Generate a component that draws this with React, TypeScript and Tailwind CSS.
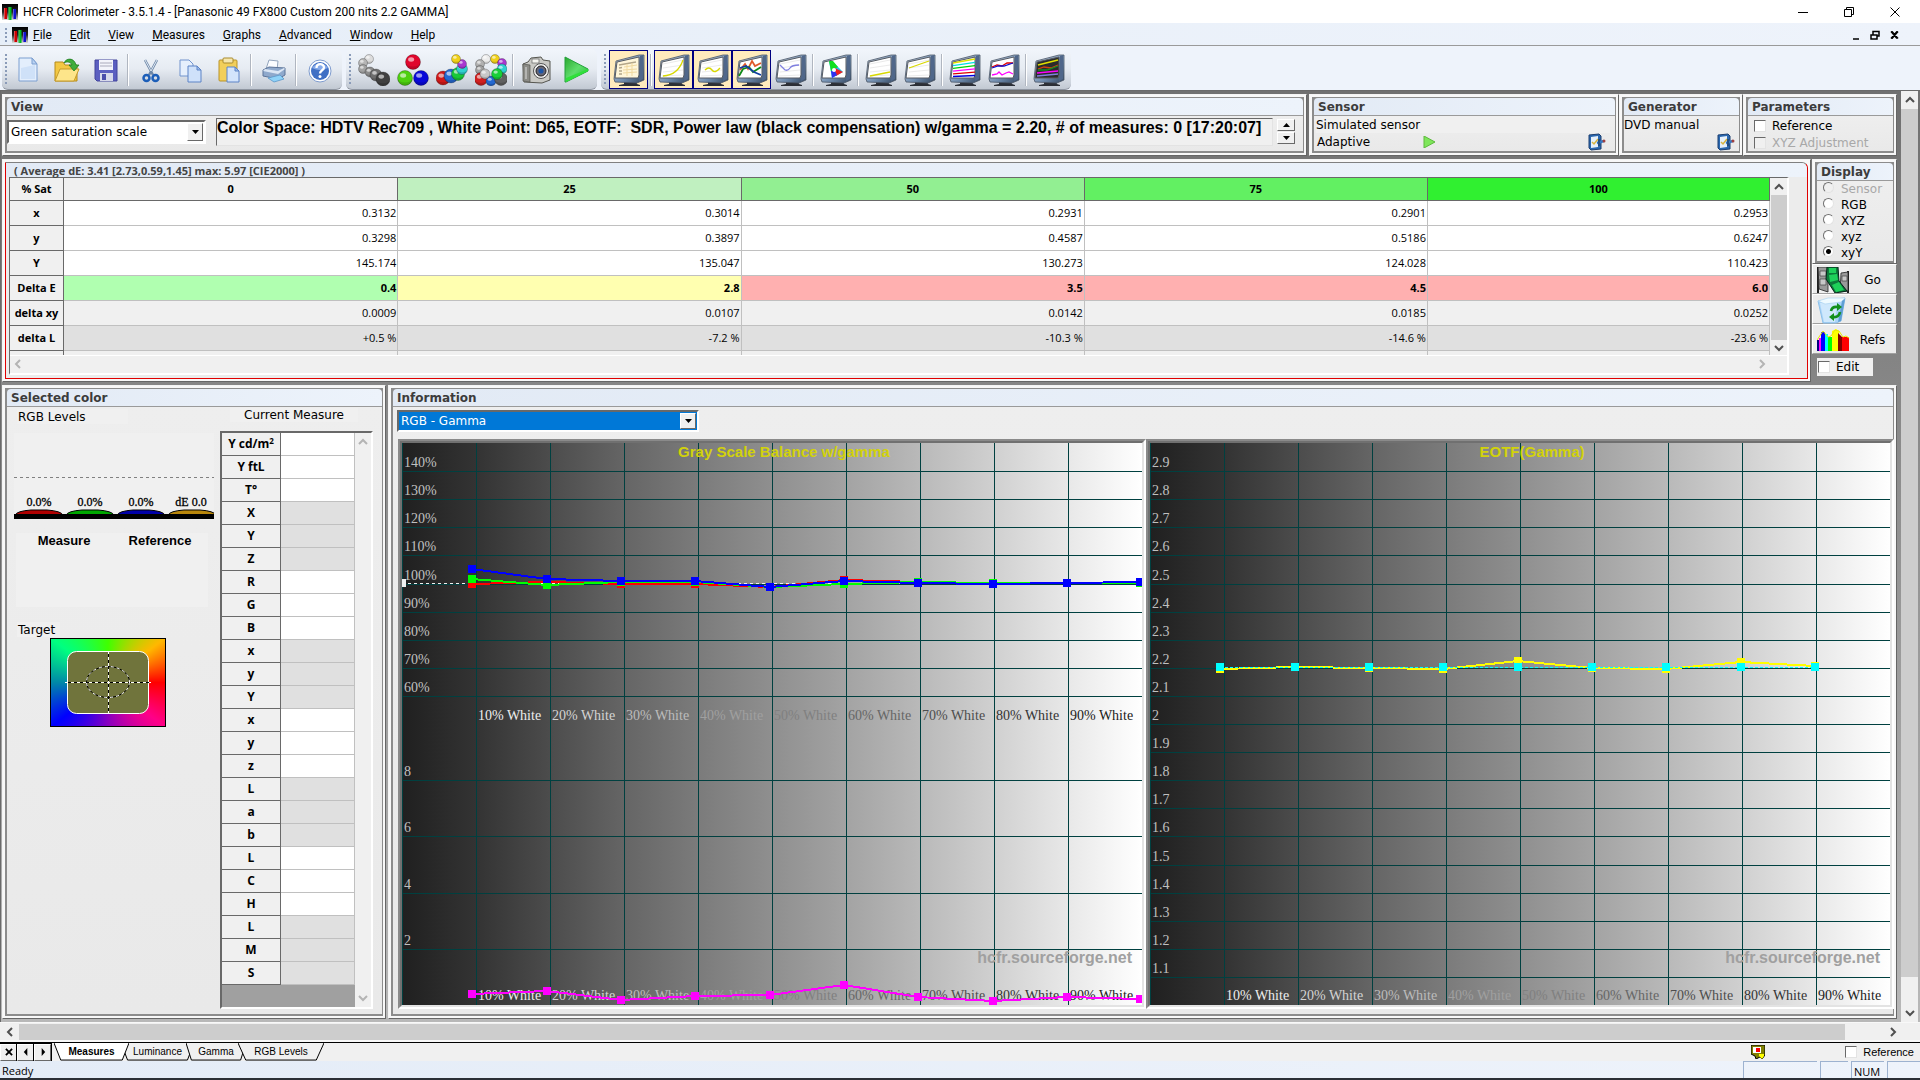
import React from 'react';

type Kids = { children?: React.ReactNode };

/* ---------- small drawings ---------- */

function AppIcon() {
  return (
    <svg viewBox="0 0 16 16" className="size-4 shrink-0" aria-hidden="true">
      <defs>
        <linearGradient id="app" x1="0" y1="0" x2="0" y2="1">
          <stop offset="0" stopColor="#000" />
          <stop offset=".5" stopColor="#222" />
          <stop offset="1" stopColor="#ddd" />
        </linearGradient>
      </defs>
      <rect width="16" height="16" fill="url(#app)" />
      <rect x="2" y="4" width="3" height="11" fill="#c00" />
      <rect x="6.5" y="3" width="3" height="13" fill="#0b2" />
      <rect x="11" y="5" width="3" height="10" fill="#11c" />
      <path d="M2 4h1v11H2zM6.5 3h1v13h-1zM11 5h1v10h-1z" fill="#fff" opacity=".3" />
    </svg>
  );
}

function Ball({ x, y, r, c }: { x: number; y: number; r: number; c: string }) {
  return (
    <g>
      <circle cx={x} cy={y} r={r} fill={c} stroke="#000" strokeOpacity=".3" strokeWidth=".8" />
      <ellipse cx={x - r * 0.25} cy={y - r * 0.35} rx={r * 0.4} ry={r * 0.3} fill="#fff" opacity=".6" />
      <path
        d={`M${x - r} ${y}a${r} ${r} 0 0 0 ${2 * r} 0a${r} ${r * 0.6} 0 0 1 ${-2 * r} 0z`}
        fill="#000"
        opacity=".15"
      />
    </g>
  );
}

function Icon({ children }: Kids) {
  return (
    <svg viewBox="0 0 32 32" className="size-8" aria-hidden="true">
      {children}
    </svg>
  );
}

const NewIcon = () => (
  <Icon>
    <path d="M7 4h13l5 6v17H7z" fill="#e3eefc" stroke="#7c9fd0" />
    <path d="M20 4v6h5z" fill="#b9d2f3" stroke="#7c9fd0" />
    <path d="M9 14l14-3v14H9z" fill="#cfe1f8" />
  </Icon>
);

const OpenIcon = () => (
  <Icon>
    <path d="M4 27V8h8l2 3h12v16z" fill="#f3c843" stroke="#b58a1c" />
    <path d="M4 27l5-12h19l-5 12z" fill="#fde58a" stroke="#c69b2a" />
    <path d="M13 9c2-5 10-6 12 2h3l-5 6-5-6h3c-1-3-5-4-8-2z" fill="#3fae3a" stroke="#1f7d22" strokeWidth=".8" />
  </Icon>
);

const SaveIcon = () => (
  <Icon>
    <path d="M5 6h22v21H7l-2-2z" fill="#5b5fc0" stroke="#42459c" />
    <rect x="9" y="6" width="14" height="10" fill="#f3f4fb" />
    <path d="M10 9h12M10 12h12" stroke="#aab" />
    <rect x="10" y="19" width="13" height="8" fill="#d7d9ea" />
    <rect x="12" y="20" width="4" height="6" fill="#4a4dab" />
  </Icon>
);

const CutIcon = () => (
  <Icon>
    <path d="M10 6l8 15M22 6l-8 15" stroke="#6d87a8" strokeWidth="2.5" />
    <path d="M10 6l6 11M22 6l-6 11" stroke="#dfe8f2" strokeWidth="1" />
    <circle cx="11.5" cy="24" r="3" fill="none" stroke="#1c5eb8" strokeWidth="2.5" />
    <circle cx="20.5" cy="24" r="3" fill="none" stroke="#1c5eb8" strokeWidth="2.5" />
  </Icon>
);

const CopyIcon = () => (
  <Icon>
    <path d="M6 6h9l4 4v12H6z" fill="#e6effc" stroke="#7193cd" />
    <path d="M14 12h9l4 4v12H14z" fill="#cfe1fa" stroke="#5d83c6" />
    <path d="M23 12v4h4z" fill="#9dbdec" stroke="#5d83c6" />
  </Icon>
);

const PasteIcon = () => (
  <Icon>
    <rect x="6" y="6" width="18" height="21" rx="1" fill="#f2cf5a" stroke="#b99328" />
    <rect x="10" y="4" width="10" height="5" rx="1" fill="#f6e7ae" stroke="#a98b2c" />
    <path d="M14 13h8l4 4v11H14z" fill="#d3e4fb" stroke="#5d83c6" />
    <path d="M22 13v4h4z" fill="#9dbdec" stroke="#5d83c6" />
  </Icon>
);

const PrintIcon = () => (
  <Icon>
    <path d="M8 15L11 6l9 1-1 9z" fill="#fafcff" stroke="#93a5bd" />
    <path d="M5 16l6-3 16 1v7l-7 4-15-3z" fill="#8fa9cc" stroke="#5c7499" />
    <path d="M5 17l15 3 7-5-1-1-6 3-13-2z" fill="#dbe6f4" />
    <path d="M10 24l12-3 4 4-10 3z" fill="#8ed2f8" stroke="#5a96c8" strokeWidth=".8" />
  </Icon>
);

const HelpIcon = () => (
  <Icon>
    <circle cx="17" cy="17" r="11" fill="#fff" stroke="#7f9cce" />
    <circle cx="17" cy="17" r="9" fill="#3f6fc4" />
    <path d="M9 14a9 8 0 0 1 16 0q-8 4-16 0z" fill="#86aaea" />
    <path d="M13.5 14c0-5 7.5-5 7.5-.5 0 3-4 2.5-4 6" fill="none" stroke="#fff" strokeWidth="2.3" />
    <circle cx="17" cy="22.5" r="1.5" fill="#fff" />
  </Icon>
);

const GrayBalls = () => (
  <Icon>
    <Ball x={11} y={5} r={4.5} c="#dcdcdc" />
    <Ball x={5} y={9} r={4.5} c="#b5b5b5" />
    <Ball x={5} y={15} r={4.5} c="#a2a2a2" />
    <Ball x={12} y={18} r={5} c="#8c8c8c" />
    <Ball x={18} y={21} r={6} c="#6d6d6d" />
    <Ball x={25} y={25} r={7} c="#404040" />
  </Icon>
);

const PrimaryBalls = () => (
  <Icon>
    <Ball x={16} y={8} r={7.5} c="#e0062c" />
    <Ball x={8} y={24} r={7.5} c="#4ed010" />
    <Ball x={24} y={24} r={7.5} c="#0808d8" />
  </Icon>
);

const SaturationBalls = () => (
  <Icon>
    <Ball x={7} y={24} r={7} c="#d01818" />
    <Ball x={15} y={22} r={7} c="#2468d0" />
    <Ball x={22} y={20} r={6.5} c="#18c838" />
    <Ball x={26} y={15} r={5.5} c="#30d0d0" />
    <Ball x={26} y={10} r={4.5} c="#a838d0" />
    <Ball x={20} y={5} r={4.5} c="#f0d018" />
  </Icon>
);

const RingBalls = () => (
  <Icon>
    <Ball x={11} y={5} r={4.5} c="#ececec" />
    <Ball x={5} y={10} r={4.5} c="#b0b0b0" />
    <Ball x={5} y={16} r={4.5} c="#a0a0a0" />
    <Ball x={20} y={5} r={4.5} c="#f0d018" />
    <Ball x={27} y={9} r={4.5} c="#a838d0" />
    <Ball x={27} y={15} r={5} c="#30d0d0" />
    <Ball x={6} y={25} r={6.5} c="#d02020" />
    <Ball x={16} y={27} r={5} c="#2468d0" />
    <Ball x={26} y={25} r={6.5} c="#606060" />
    <Ball x={10} y={20} r={5} c="#c8c8c8" />
    <Ball x={22} y={20} r={5.5} c="#18d038" />
  </Icon>
);

const CameraIcon = () => (
  <Icon>
    <path d="M3 10l5-2 3-4 10-1 2 3 7 1v19l-8 3-18-1z" fill="#c9c9c5" stroke="#55554f" />
    <path d="M3 10l7 1v17l-7-1z" fill="#8b8b86" stroke="#55554f" strokeWidth=".7" />
    <rect x="12" y="5" width="7" height="4" fill="#f4f4f0" stroke="#666" strokeWidth=".7" />
    <circle cx="21" cy="17" r="7.5" fill="#eee" stroke="#555" />
    <circle cx="21" cy="17" r="5" fill="#667" stroke="#222" />
    <circle cx="21" cy="17" r="2.5" fill="#1c56a8" />
    <path d="M6 13v12" stroke="#ddd" />
  </Icon>
);

const PlayIcon = () => (
  <Icon>
    <defs>
      <linearGradient id="play" x1="0" y1="0" x2="1" y2="1">
        <stop offset="0" stopColor="#2aa82e" />
        <stop offset=".5" stopColor="#5fdd6c" />
        <stop offset="1" stopColor="#1fbf2c" />
      </linearGradient>
    </defs>
    <path d="M6 3l23 12v2L7 28H6z" fill="url(#play)" stroke="#23a13a" />
    <path d="M7 24l22-9v2L7 28z" fill="#2fe03a" />
  </Icon>
);

function Monitor({ screen = '#fff', children }: Kids & { screen?: string }) {
  return (
    <Icon>
      <defs>
        <linearGradient id="bez" x1="0" y1="0" x2="1" y2="1">
          <stop offset="0" stopColor="#cfdcec" />
          <stop offset=".6" stopColor="#6f8cae" />
          <stop offset="1" stopColor="#33465e" />
        </linearGradient>
      </defs>
      <path d="M11 26h12l1 4 3 1v1H6v-1l5-1z" fill="#2c2f36" />
      <path d="M1 25L3 7l23-6h5v25l-7 3-22-1z" fill="url(#bez)" stroke="#4a5566" strokeWidth=".8" />
      <path d="M27 2l3-1v24l-4 2z" fill="#50678a" />
      <path d="M4 8l22-5v18l-1 3H2z" fill={screen} stroke="#565b63" />
      {children}
    </Icon>
  );
}

const line = (d: string, c: string, key?: number) => (
  <path key={key} d={d} fill="none" stroke={c} strokeWidth="1.3" />
);
const faint = (
  <path d="M5 10l20-4M5 14l20-3M5 18l20-2M4 22l21-1" stroke="#e4e4e4" strokeWidth=".8" fill="none" />
);

const TableMonitor = () => (
  <Monitor screen="#fff6da">
    <path d="M6 11l17-3M6 14l3-.5M6 17h3M6 20h3" stroke="#b3a68a" strokeWidth="1.5" />
    <path d="M11 13l13-2M10 16l14-1M10 19l14-1M14 10v12M19 9v13" stroke="#f0d9a0" fill="none" />
  </Monitor>
);
const CurveMonitor = () => <Monitor>{faint}{line('M5 22q15-1 20-16', '#d8d800')}</Monitor>;
const WaveMonitor = () => <Monitor>{faint}{line('M8 16q4-4 7 0t8-2', '#d8d800')}</Monitor>;
const RgbMonitor = () => (
  <Monitor>
    <g fill="none" strokeWidth="1.8">
      <path d="M4 16l5-6 3 5 4-8 3 5 6-3" stroke="#e0592a" />
      <path d="M3 22l4-7 6-2 4 5 8-5" stroke="#108a18" />
      <path d="M4 14l6-2 8 6 7 3" stroke="#103fa0" />
    </g>
  </Monitor>
);
const DipMonitor = () => <Monitor>{faint}{line('M5 11l5 5q3 1 5-2t9-3', '#8080e0')}</Monitor>;
const CieMonitor = () => (
  <Monitor>
    <path d="M9 7l3 0 11 11-11 6z" fill="#20c0f0" />
    <path d="M9 7l4 0 5 6-7 4z" fill="#10e020" />
    <path d="M23 18l-8-4-2 4 3 4z" fill="#f02020" />
    <path d="M12 24l-1-7 4 0 2 4z" fill="#3030f0" />
    <circle cx="14" cy="16" r="2" fill="#fff" />
  </Monitor>
);
const LowMonitor = () => <Monitor>{faint}{line('M5 22l20-4', '#d8d800')}</Monitor>;
const RiseMonitor = () => <Monitor>{faint}{line('M5 14l20-7', '#d8d800')}</Monitor>;
const multi = (cols: string[]) =>
  cols.map((c, i) => line(`M4 ${9 + i * 2.7}l22-${4 - i * 0.6}`, c, i));
const MultiMonitor = () => (
  <Monitor>{multi(['#e0e000', '#00e0e0', '#00d000', '#ff00ff', '#e00000', '#0000e0'])}</Monitor>
);
const NearMonitor = () => (
  <Monitor>
    {line('M4 13l5-2 5 1 5-3 6 0', '#e00000')}
    {line('M4 14l6-2 6 0 9-3', '#1010d0')}
    {line('M4 21l5-1 2-2 3 3 4-2 3-1 4 2', '#ff00ff')}
  </Monitor>
);
const DarkMonitor = () => (
  <Monitor screen="#2b2b2b">
    {line('M5 11l20-5', '#e0e000')}
    {line('M5 15l6-2 7 1 7-3', '#d04010')}
    {line('M5 16l9 0 11-4', '#109020')}
    {line('M4 19l21-2', '#ff00ff')}
    {line('M4 22l21-2', '#8080e0')}
  </Monitor>
);

const PropsIcon = () => (
  <svg viewBox="0 0 18 18" className="size-[18px]" aria-hidden="true">
    <path d="M1 2l10-1 2 2v13l-10 1-2-2z" fill="#2a68b0" stroke="#1c3f70" />
    <path d="M3 4l7-1v11l-7 1z" fill="#e6f0fb" />
    <path d="M4 9l2 2 4-5" fill="none" stroke="#d8b540" strokeWidth="1.5" />
    <path d="M9 10l7-2" stroke="#3477c4" strokeWidth="2.5" />
    <path d="M11 6v7" stroke="#24446c" strokeWidth="1.5" />
    <circle cx="16" cy="8" r="1.5" fill="#a04040" />
  </svg>
);

const GoIcon = () => (
  <svg viewBox="0 0 32 26" className="h-[26px] w-8" aria-hidden="true">
    <rect width="32" height="26" fill="#f0f0f0" />
    <path d="M0 0h2v26H0zM30 4h2v22h-2z" fill="#222" />
    <path d="M1 0h10v25L2 22z" fill="#9a9a9a" stroke="#222" strokeWidth=".8" />
    <path d="M24 6l7-1v19l-8 1z" fill="#9a9a9a" stroke="#222" strokeWidth=".8" />
    <path d="M3 4h6v5H3zM3 12h6v6H3zM25 9h5v5h-5z" fill="#c8c8c8" stroke="#444" strokeWidth=".7" />
    <path d="M10 0h11l1 14 8 10-12 2L9 12z" fill="#0d7a3a" stroke="#06241a" />
    <path d="M12 1h7v5h-7zM12 8l8-1 1 6-8 2zM15 18l7-3 5 8-8 2z" fill="#1ed05a" />
  </svg>
);

const DeleteIcon = () => (
  <svg viewBox="0 0 30 27" className="h-[27px] w-[30px]" aria-hidden="true">
    <path d="M1 4l27-3-4 23-5 2H6z" fill="#a9d4f8" stroke="#8cc0ea" />
    <path d="M3 6l17-1-2 20H7z" fill="#cfe8fc" />
    <path d="M1 4l10-3h17l-4 4-16 2z" fill="#eefaff" stroke="#a6d0ee" strokeWidth=".6" />
    <path d="M25 4l3-2-4 22-3 1z" fill="#5f9fd4" />
    <g fill="none" stroke="#12901c" strokeWidth="2.6">
      <path d="M14 14q1-5 7-4" />
      <path d="M23 15q-1 6-7 5" />
    </g>
    <path d="M20 6l5 4-5 4zM17 16v8l-5-4z" fill="#12901c" />
  </svg>
);

const RefsIcon = () => (
  <svg viewBox="0 0 32 22" className="h-[22px] w-8" aria-hidden="true">
    <path d="M0 11h2v11H0z" fill="#000080" />
    <path d="M2 9h3v13H2z" fill="#ff00ff" />
    <path d="M4 3h4v19H4z" fill="#0000ff" />
    <path d="M8 5h3v17H8z" fill="#00ffff" />
    <path d="M11 8h4v14h-4z" fill="#00ff00" />
    <path d="M15 2l4-2 3 2v20h-7z" fill="#ffff00" />
    <path d="M21 4l4 4v14h-4z" fill="#800000" />
    <path d="M25 8h7v14h-7z" fill="#ff0000" />
    <path d="M0 11l6-9 5 6 3-1 4-6 4 1 4 6 3-1 3 2" fill="none" stroke="#e8e800" />
  </svg>
);

function Chevron({ d, dim }: { d: string; dim?: boolean }) {
  return (
    <svg viewBox="0 0 10 10" className="size-2.5" aria-hidden="true">
      <path d={d} fill="none" stroke={dim ? '#b4b4b4' : '#505050'} strokeWidth="2" />
    </svg>
  );
}
const UP = 'M1 7l4-4 4 4';
const DOWN = 'M1 3l4 4 4-4';
const LEFT = 'M7 1L3 5l4 4';
const RIGHT = 'M3 1l4 4-4 4';

function Tri({ up }: { up?: boolean }) {
  return (
    <svg viewBox="0 0 7 4" className="h-1 w-[7px]" aria-hidden="true">
      <path d={up ? 'M0 4h7L3.5 0z' : 'M0 0h7L3.5 4z'} />
    </svg>
  );
}

/* ---------- shared controls ---------- */

function Panel({
  title,
  className = '',
  bodyClass = '',
  children,
}: Kids & { title: string; className?: string; bodyClass?: string }) {
  return (
    <section
      className={`flex flex-col border border-t-[#f4f4f4] border-r-[#666] border-b-[#666] border-l-[#f4f4f4] bg-[#f8f8f8] p-[2px] ${className}`}
    >
      <div className="flex flex-1 flex-col border-t border-r border-b-2 border-l-2 border-[#8c8c8c] bg-[#8c8c8c]">
        <h2 className="h-[18px] rounded-t-sm border-b border-[#9a9a9a] bg-linear-to-r from-[#e2eaf5] to-[#edf3fb] pl-1 text-[12px] leading-[18px] font-bold text-[#3c3c3c]">
          {title}
        </h2>
        <div className={`flex-1 bg-linear-to-b from-[#eeeeee] to-[#e9e9e9] ${bodyClass}`}>{children}</div>
      </div>
    </section>
  );
}

const raised =
  'border border-t-white border-l-white border-r-[#696969] border-b-[#696969] bg-[#f0f0f0]';
const sunken = 'border border-t-[#696969] border-l-[#696969] border-r-[#e3e3e3] border-b-[#e3e3e3]';

function Dropdown({
  label,
  options,
  className,
  selectClass,
}: {
  label: string;
  options: string[];
  className: string;
  selectClass: string;
}) {
  return (
    <div className={`relative ${className}`}>
      <select
        aria-label={label}
        className={`block w-full appearance-none border-2 border-t-[#696969] border-r-white border-b-white border-l-[#696969] text-[12px] outline-none ${selectClass}`}
      >
        {options.map((o) => (
          <option key={o}>{o}</option>
        ))}
      </select>
      <span
        className={`pointer-events-none absolute inset-y-[3px] right-[3px] flex w-4 items-center justify-center ${raised}`}
      >
        <Tri />
      </span>
    </div>
  );
}

function Check({ label, disabled, text = 'text-[12px]' }: { label: string; disabled?: boolean; text?: string }) {
  return (
    <label className={`flex items-center gap-1.5 ${text} ${disabled ? 'text-[#a8a8a8]' : ''}`}>
      <input
        type="checkbox"
        disabled={disabled}
        className={`size-3 shrink-0 appearance-none ${sunken} ${disabled ? 'bg-[#f0f0f0]' : 'bg-white'}`}
      />
      {label}
    </label>
  );
}

/* ---------- toolbar ---------- */

function Band({ children, className = '', grip = 'mx-[3px]' }: Kids & { className?: string; grip?: string }) {
  return (
    <div
      className={`flex h-[41px] items-center rounded-md border-b border-[#8f96a1] bg-linear-to-b from-[#f1f5fb] via-[#e6ebf2] to-[#c2c9d3] pt-px ${className}`}
    >
      <span className={`h-8 w-0.5 bg-[repeating-linear-gradient(to_bottom,#8a9bb8_0_2px,transparent_2px_4px)] ${grip}`} />
      {children}
    </div>
  );
}

const Sep = () => <span className="mx-[2px] h-8 w-0.5 border-l border-[#b0b6c0] bg-white" />;

function Tool({ label, icon, on }: { label: string; icon: React.ReactNode; on?: boolean }) {
  return (
    <button
      type="button"
      aria-label={label}
      className={`flex h-[39px] w-[39px] items-center justify-center ${on ? 'border border-[#000080] bg-[#ffebbd]' : ''}`}
    >
      {icon}
    </button>
  );
}

/* ---------- measures table ---------- */

const heads: [string, string][] = [
  ['0', 'bg-[#f0f0f0]'],
  ['25', 'bg-[#c0f0c0]'],
  ['50', 'bg-[#92ef92]'],
  ['75', 'bg-[#62f062]'],
  ['100', 'bg-[#30f030]'],
];
const measures: [string, string[]][] = [
  ['x', ['0.3132', '0.3014', '0.2931', '0.2901', '0.2953']],
  ['y', ['0.3298', '0.3897', '0.4587', '0.5186', '0.6247']],
  ['Y', ['145.174', '135.047', '130.273', '124.028', '110.423']],
  ['Delta E', ['0.4', '2.8', '3.5', '4.5', '6.0']],
  ['delta xy', ['0.0009', '0.0107', '0.0142', '0.0185', '0.0252']],
  ['delta L', ['+0.5 %', '-7.2 %', '-10.3 %', '-14.6 %', '-23.6 %']],
];
const deltaTint = ['bg-[#b0ffb0]', 'bg-[#ffffb0]', 'bg-[#ffb0b0]', 'bg-[#ffb0b0]', 'bg-[#ffb0b0]'];

function cellTint(row: number, col: number) {
  if (row === 3) return `font-bold ${deltaTint[col]}`;
  if (row === 4) return 'bg-[#f0f0f0]';
  if (row === 5) return 'bg-[#e0e0e0]';
  return 'bg-white';
}

function MeasureTable() {
  return (
    <table className="w-full table-fixed border-separate border-spacing-0 font-['Open_Sans',sans-serif] text-[11px] leading-4">
      <colgroup>
        <col className="w-[54px]" />
        <col className="w-[19%]" />
        <col className="w-[19.5%]" />
        <col className="w-[19.5%]" />
        <col className="w-[19.5%]" />
        <col />
      </colgroup>
      <thead>
        <tr className="h-[23px]">
          <th scope="col" className="border-r border-b border-[#696969] bg-[#f0f0f0]">% Sat</th>
          {heads.map(([h, tint]) => (
            <th key={h} scope="col" className={`border-r border-b border-[#696969] ${tint}`}>
              {h}
            </th>
          ))}
        </tr>
      </thead>
      <tbody>
        {measures.map(([name, cells], r) => (
          <tr key={name} className="h-[25px]">
            <th scope="row" className="border-r border-b border-[#696969] bg-[#f0f0f0]">{name}</th>
            {cells.map((v, c) => (
              <td key={c} className={`border-r border-b border-[#c0c0c0] pr-px text-right ${cellTint(r, c)}`}>
                {v}
              </td>
            ))}
          </tr>
        ))}
        <tr className="h-1">
          <th className="border-r border-[#696969] bg-[#f0f0f0]" />
          {heads.map(([h]) => (
            <td key={h} className="border-r border-[#c0c0c0] bg-[#f0f0f0]" />
          ))}
        </tr>
      </tbody>
    </table>
  );
}

/* ---------- selected colour ---------- */

const fields = 'Y cd/m²,Y ftL,T°,X,Y,Z,R,G,B,x,y,Y,x,y,z,L,a,b,L,C,H,L,M,S'.split(',');

function FieldTable() {
  return (
    <table className="w-full table-fixed border-separate border-spacing-0 font-['Open_Sans',sans-serif] text-[12px] leading-4">
      <tbody>
        {fields.map((f, i) => (
          <tr key={i} className="h-[23px]">
            <th scope="row" className="w-[59px] border-r border-b border-[#696969] bg-[#f0f0f0]">
              {i === 0 ? (
                <>
                  Y cd/m<sup className="text-[8px]">2</sup>
                </>
              ) : (
                f
              )}
            </th>
            <td
              className={`border-r border-b border-[#c0c0c0] ${Math.floor(i / 3) % 2 ? 'bg-[#e0e0e0]' : 'bg-white'}`}
            />
          </tr>
        ))}
      </tbody>
    </table>
  );
}

function LevelBars() {
  const bars: [number, string, string][] = [
    [25, '#b00000', '0.0%'],
    [76, '#00a800', '0.0%'],
    [127, '#0000a8', '0.0%'],
    [178, '#b8860b', 'dE 0.0'],
  ];
  return (
    <svg viewBox="0 0 200 86" className="mt-[9px] ml-[7px] h-[86px] w-[200px] bg-[#f0f0f0]">
      <path d="M0 44.5h200" stroke="#808080" strokeDasharray="3 3" />
      {bars.map(([x, c, t]) => (
        <g key={x}>
          <path d={`M${x - 24} 82q2-4 16-5h16q14 1 16 5z`} fill={c} stroke="#000" />
          <text
            x={t === '0.0%' ? x : x - 1}
            y="73"
            textAnchor="middle"
            fontSize="12"
            fontFamily="Liberation Serif, serif"
            stroke="#000"
            strokeWidth=".3"
          >
            {t}
          </text>
        </g>
      ))}
      <rect y="81" width="200" height="5" />
    </svg>
  );
}

function Target() {
  return (
    <div className="relative mt-px ml-[43px] h-[89px] w-[116px] border border-black bg-[conic-gradient(#40ff00,#ffb800_52deg,#ff0000_90deg,#ff0088_128deg,#8800c0_180deg,#0000ff_232deg,#0088a8_270deg,#00ff80_308deg,#40ff00)]">
      <svg viewBox="0 0 114 87" className="absolute inset-0 size-full">
        <rect x="16.5" y="12.5" width="81" height="62" rx="9" fill="#70743c" stroke="#fff" />
        <g fill="none" stroke="#000">
          <path d="M14 43.5h86M57.5 12v62" />
          <ellipse cx="57" cy="43" rx="21.5" ry="15.5" />
        </g>
        <g fill="none" stroke="#fff" strokeDasharray="3 3">
          <path d="M14 43.5h86M57.5 12v62" />
          <ellipse cx="57" cy="43" rx="21.5" ry="15.5" />
        </g>
      </svg>
    </div>
  );
}

/* ---------- charts ---------- */

const STEP_X = 74;
const STEP_Y = 28.1;
const xs = [70, 145, 219, 293, 368, 442, 516, 591, 665, 738];
const whites = ['#eeeeee', '#d4d4d4', '#bcbcbc', '#a0a0a0', '#808080', '#666666', '#4d4d4d', '#333333', '#1a1a1a'];
const stops = ['#202020', '#333333', '#4c4c4c', '#656565', '#7b7b7b', '#8f8f8f', '#a3a3a3', '#b9b9b9', '#d0d0d0', '#e8e8e8', '#ffffff'];

function Series({ ys, color }: { ys: number[]; color: string }) {
  return (
    <g fill={color} shapeRendering="crispEdges">
      <polyline points={ys.map((y, i) => `${xs[i]},${y}`).join(' ')} fill="none" stroke={color} strokeWidth="2" />
      {ys.map((y, i) => (
        <rect key={i} x={xs[i] - 4} y={Math.round(y) - 4} width="8" height="8" />
      ))}
    </g>
  );
}

function ChartFrame({
  title,
  rows,
  labels,
  whiteRows,
  children,
}: Kids & { title: string; rows: number[]; labels: [number, string][]; whiteRows: number[] }) {
  return (
    <figure className="min-w-0 flex-1 border-2 border-t-[#8a8a8a] border-r-white border-b-white border-l-[#8a8a8a]">
      <div className="border-2 border-t-[#707070] border-r-[#e3e3e3] border-b-[#e3e3e3] border-l-[#707070]">
        <svg viewBox="0 0 740 562" className="block w-full" role="img" aria-label={title}>
          <defs>
            <linearGradient id="grayscale">
              {stops.map((c, i) => (
                <stop key={c} offset={i / 10} stopColor={c} />
              ))}
            </linearGradient>
          </defs>
          <rect width="740" height="562" fill="url(#grayscale)" />
          <g stroke="#004040" shapeRendering="crispEdges">
            {[0, 1, 2, 3, 4, 5, 6, 7, 8, 9].map((i) => (
              <path key={i} d={`M${i * STEP_X + 0.5} 0v562`} />
            ))}
            {rows.map((k) => (
              <path key={k} d={`M0 ${Math.round(k * STEP_Y) + 0.5}h740`} />
            ))}
          </g>
          <g fontFamily="Liberation Serif, serif" fontSize="14">
            {labels.map(([k, t]) => (
              <text key={k} x="2" y={Math.round(k * STEP_Y) - 4} fill="#c0c0c0">
                {t}
              </text>
            ))}
            {whiteRows.map((y) =>
              whites.map((c, i) => (
                <text key={`${y}-${i}`} x={STEP_X * (i + 1) + 2} y={y} fill={c}>
                  {`${i + 1}0% White`}
                </text>
              )),
            )}
          </g>
          <g fontFamily="Liberation Sans, Arial, sans-serif" fontWeight="700">
            <text x="382" y="14" fontSize="15" fill="#d2d20a" textAnchor="middle">
              {title}
            </text>
            <text x="730" y="520" fontSize="16" fill="#a0a0a0" textAnchor="end">
              hcfr.sourceforge.net
            </text>
          </g>
          {children}
        </svg>
      </div>
    </figure>
  );
}

const range = (a: number, b: number) => Array.from({ length: b - a + 1 }, (_, i) => a + i);

function BalanceChart() {
  const labels: [number, string][] = [
    ...range(1, 9).map((k): [number, string] => [k, `${150 - k * 10}%`]),
    [12, '8'],
    [14, '6'],
    [16, '4'],
    [18, '2'],
  ];
  return (
    <ChartFrame
      title="Gray Scale Balance w/gamma"
      rows={[...range(1, 9), 12, 14, 16, 18]}
      labels={labels}
      whiteRows={[277, 557]}
    >
      <path d="M0 140.5h740" stroke="#f0f0f0" strokeDasharray="3 3" />
      <rect y="136" width="4" height="8" fill="#f0f0f0" />
      <Series color="#ff0000" ys={[141, 139, 141, 141, 144, 137, 139, 141, 140, 139]} />
      <Series color="#00ff00" ys={[136, 142, 139, 139, 144, 141, 139, 140, 140, 140]} />
      <Series color="#0000ff" ys={[126, 136, 138, 138, 144, 138, 140, 141, 140, 139]} />
      <Series color="#ff00ff" ys={[551, 548, 557, 553, 552, 542, 554, 558, 554, 556]} />
    </ChartFrame>
  );
}

function GammaChart() {
  return (
    <ChartFrame
      title="EOTF(Gamma)"
      rows={range(1, 19)}
      labels={range(1, 19).map((k): [number, string] => [k, String((30 - k) / 10)])}
      whiteRows={[557]}
    >
      <Series color="#ffff00" ys={[226, 224, 225, 226, 218, 225, 226, 219, 223]} />
      <path d="M70 224.5h595" stroke="#00ffff" strokeDasharray="3 2" />
      {xs.slice(0, 9).map((x) => (
        <rect key={x} x={x - 4} y="220" width="8" height="8" fill="#00ffff" />
      ))}
    </ChartFrame>
  );
}

/* ---------- page ---------- */

const menus = ['File', 'Edit', 'View', 'Measures', 'Graphs', 'Advanced', 'Window', 'Help'];

function WindowButtons() {
  const draw = (label: string, d: string) => (
    <button type="button" aria-label={label} className="flex w-[46px] items-center justify-center">
      <svg viewBox="0 0 12 12" className="size-3" aria-hidden="true">
        <path d={d} fill="none" stroke="#000" />
      </svg>
    </button>
  );
  return (
    <div className="ml-auto flex h-5 pr-0.5">
      {draw('Minimize', 'M1 6.5h10')}
      {draw('Restore', 'M1.5 3.5h7v7h-7zM3.5 3.5v-2h7v7h-2')}
      {draw('Close', 'M1.5 1.5l9 9M10.5 1.5l-9 9')}
    </div>
  );
}

function ChildButtons() {
  const draw = (label: string, d: string) => (
    <button type="button" aria-label={label} className="flex w-[19px] items-center justify-center">
      <svg viewBox="0 0 10 10" className="size-2.5" aria-hidden="true">
        <path d={d} fill="none" stroke="#000" strokeWidth="1.5" />
      </svg>
    </button>
  );
  return (
    <div className="ml-auto flex pr-[17px]">
      {draw('Minimize document', 'M2 9h6')}
      {draw('Restore document', 'M1 5h6v4H1zM3 5V1.5h6V6H7')}
      {draw('Close document', 'M2 1.5l6 7M8 1.5l-6 7M3 1.5l6 7M9 1.5l-6 7')}
    </div>
  );
}

function Tab({ label, width, active }: { label: string; width: string; active?: boolean }) {
  return (
    <button type="button" className={`relative -ml-2 flex h-[18px] items-center justify-center ${width} ${active ? 'z-10 font-bold' : ''}`}>
      <svg viewBox="0 0 100 19" preserveAspectRatio="none" className="absolute inset-0 size-full" aria-hidden="true">
        <path d="M0 0L9 18h82l9-18" fill={active ? '#fff' : '#f0f0f0'} stroke="#000" vectorEffect="non-scaling-stroke" />
      </svg>
      <span className="relative">{label}</span>
    </button>
  );
}

export default function App() {
  return (
    <div className="flex min-h-screen flex-col overflow-hidden bg-[#eef3fb] font-['DejaVu_Sans',Verdana,sans-serif] text-[12px] leading-4 text-black">
      <header className="flex h-[23px] items-center bg-white pl-0.5 font-[Roboto,sans-serif]">
        <AppIcon />
        <h1 className="ml-[5px] text-[12px]">HCFR Colorimeter - 3.5.1.4 - [Panasonic 49 FX800 Custom 200 nits 2.2 GAMMA]</h1>
        <WindowButtons />
      </header>

      <nav className="flex h-[23px] items-center border-b border-[#9a9a9a] bg-linear-to-r from-[#e6eef8] to-[#eef3fb] pt-px pl-[5px] font-[Roboto,sans-serif] text-[12px]">
        <span className="mr-[5px] h-3.5 w-0.5 bg-[repeating-linear-gradient(to_bottom,#8a9bb8_0_2px,transparent_2px_4px)]" />
        <AppIcon />
        <div className="ml-[5px] flex gap-[18px]">
          {menus.map((m) => (
            <button key={m} type="button">
              <span className="underline">{m[0]}</span>
              {m.slice(1)}
            </button>
          ))}
        </div>
        <ChildButtons />
      </nav>

      <div className="flex h-11 items-end gap-1 bg-[#eef3fb] pl-0.5">
        <Band className="w-[340px]" grip="mr-px ml-[3px]">
          <Tool label="New" icon={<NewIcon />} />
          <Tool label="Open" icon={<OpenIcon />} />
          <Tool label="Save" icon={<SaveIcon />} />
          <Sep />
          <Tool label="Cut" icon={<CutIcon />} />
          <Tool label="Copy" icon={<CopyIcon />} />
          <Tool label="Paste" icon={<PasteIcon />} />
          <Sep />
          <Tool label="Print" icon={<PrintIcon />} />
          <Sep />
          <Tool label="Help" icon={<HelpIcon />} />
        </Band>
        <Band className="w-[251px]">
          <Tool label="Measure grays" icon={<GrayBalls />} />
          <Tool label="Measure primaries" icon={<PrimaryBalls />} />
          <Tool label="Measure saturations" icon={<SaturationBalls />} />
          <Tool label="Measure all" icon={<RingBalls />} />
          <Sep />
          <Tool label="Snapshot" icon={<CameraIcon />} />
          <Tool label="Continuous measures" icon={<PlayIcon />} />
        </Band>
        <Band className="w-[470px]">
          <Tool label="Measures" icon={<TableMonitor />} on />
          <Sep />
          <Tool label="Luminance" icon={<CurveMonitor />} on />
          <Tool label="Gamma" icon={<WaveMonitor />} on />
          <Tool label="RGB levels" icon={<RgbMonitor />} on />
          <Tool label="Color temperature" icon={<DipMonitor />} />
          <Sep />
          <Tool label="CIE diagram" icon={<CieMonitor />} />
          <Sep />
          <Tool label="Near black" icon={<LowMonitor />} />
          <Tool label="Near white" icon={<RiseMonitor />} />
          <Sep />
          <Tool label="Saturation luminance" icon={<MultiMonitor />} />
          <Tool label="Saturation shift" icon={<NearMonitor />} />
          <Sep />
          <Tool label="Combined" icon={<DarkMonitor />} />
        </Band>
      </div>

      <div className="flex flex-1 border-t border-l border-[#6a6a6a] bg-linear-to-b from-[#707070] to-[#b8b8b8]">
        <main className="flex min-w-0 flex-1 flex-col gap-[3px] pt-[3px] pr-1 pb-0.5 pl-px">
          <div className="flex h-[62px]">
            <Panel title="View" className="mr-0.5 min-w-0 flex-1" bodyClass="flex items-start">
              <Dropdown
                label="Measures shown"
                options={['Green saturation scale', 'Red saturation scale', 'Blue saturation scale']}
                className="mt-1 w-[199px]"
                selectClass="h-6 bg-white pl-0.5"
              />
              <output className={`mt-0.5 ml-2.5 h-7 min-w-0 flex-1 overflow-hidden whitespace-pre ${sunken} bg-[#f0f0f0] font-['Liberation_Sans',Arial,sans-serif] text-[16px] leading-[18px] font-bold`}>
                {'Color Space: HDTV Rec709 , White Point: D65, EOTF:  SDR, Power law (black compensation) w/gamma = 2.20, # of measures: 0 [17:20:07]'}
              </output>
              <div className="mt-[3px] mr-2 ml-1 flex w-[18px] flex-col gap-px">
                <button type="button" aria-label="Scroll up" className={`flex h-3 items-center justify-center ${raised}`}>
                  <Tri up />
                </button>
                <button type="button" aria-label="Scroll down" className={`flex h-3 items-center justify-center ${raised}`}>
                  <Tri />
                </button>
              </div>
            </Panel>
            <Panel title="Sensor" className="w-[310px]" bodyClass="pl-0.5">
              <p className="w-[294px] bg-[#f0f0f0] pt-px">Simulated sensor</p>
              <div className="flex items-center pl-px">
                <span className="w-[106px]">Adaptive</span>
                <button type="button" aria-label="Start sensor">
                  <svg viewBox="0 0 12 12" className="size-3" aria-hidden="true">
                    <path d="M1 0l11 6-11 6z" fill="#7ee65a" stroke="#5cb83c" />
                  </svg>
                </button>
                <button type="button" aria-label="Sensor properties" className="mr-[9px] ml-auto">
                  <PropsIcon />
                </button>
              </div>
            </Panel>
            <Panel title="Generator" className="w-[124px]">
              <p className="pt-px">DVD manual</p>
              <button type="button" aria-label="Generator properties" className="mr-1 ml-auto block">
                <PropsIcon />
              </button>
            </Panel>
            <Panel title="Parameters" className="w-[154px]" bodyClass="flex flex-col gap-px pt-0.5 pl-1.5">
              <Check label="Reference" />
              <Check label="XYZ Adjustment" disabled />
            </Panel>
          </div>

          <div className="flex gap-px">
            <section className="flex min-w-0 flex-1 flex-col border border-t-[#f4f4f4] border-r-[#666] border-b-[#666] border-l-[#f4f4f4] bg-[#f8f8f8] p-[2px]">
              <div className="rounded-tr-md border border-[#e00000] border-t-[#808080] bg-[#ececec] pl-[3px]">
                <h2 className="-ml-[3px] h-3.5 rounded-tr-md bg-linear-to-r from-[#e2eaf5] to-[#edf3fb] pl-2 font-['Open_Sans',sans-serif] text-[11px] leading-[15px] font-bold text-[#444]">
                  ( Average dE: 3.41 [2.73,0.59,1.45] max: 5.97 [CIE2000] )
                </h2>
                <div className="mr-[18px] mb-[3px] border-t border-r-2 border-b-2 border-l border-t-[#696969] border-r-white border-b-white border-l-[#696969] bg-[#f0f0f0]">
                  <div className="flex">
                    <div className="min-w-0 flex-1">
                      <MeasureTable />
                    </div>
                    <div className="flex w-[17px] flex-col items-center pt-1 pb-0.5">
                      <Chevron d={UP} />
                      <span className="my-[3px] w-4 flex-1 bg-[#cdcdcd]" />
                      <Chevron d={DOWN} />
                    </div>
                  </div>
                  <div className="flex h-[18px] items-center justify-between border-t border-white pr-5 pb-0.5 pl-[3px]">
                    <Chevron d={LEFT} dim />
                    <Chevron d={RIGHT} dim />
                  </div>
                </div>
              </div>
            </section>

            <aside className="w-[85px]">
              <Panel title="Display" className="h-[105px]" bodyClass="flex flex-col">
                {['Sensor', 'RGB', 'XYZ', 'xyz', 'xyY'].map((r) => (
                  <label
                    key={r}
                    className={`flex h-4 items-center gap-[7px] pl-1.5 ${r === 'Sensor' ? 'text-[#a8a8a8]' : ''}`}
                  >
                    <input
                      type="radio"
                      name="display"
                      disabled={r === 'Sensor'}
                      defaultChecked={r === 'xyY'}
                      className="-mt-1 size-[11px] shrink-0 appearance-none rounded-full border border-t-[#707070] border-r-[#e3e3e3] border-b-[#e3e3e3] border-l-[#707070] bg-white checked:bg-[radial-gradient(#000_0_2px,#fff_3px)] disabled:bg-[#f0f0f0]"
                    />
                    {r}
                  </label>
                ))}
              </Panel>
              {[
                ['Go', <GoIcon />],
                ['Delete', <DeleteIcon />],
                ['Refs', <RefsIcon />],
              ].map(([t, icon], i) => (
                <button
                  key={i}
                  type="button"
                  className="flex h-[30px] w-full items-center border border-t-white border-r-[#808080] border-b-[#a0a0a0] border-l-white bg-[#ececec] pt-0.5 pl-1"
                >
                  <span className="w-8 shrink-0">{icon}</span>
                  <span className="flex-1 text-center">{t}</span>
                </button>
              ))}
              <div className="mt-1 ml-[5px] flex h-[18px] w-14 items-center bg-[#f0f0f0] pl-px">
                <Check label="Edit" />
              </div>
            </aside>
          </div>

          <div className="flex gap-0.5">
            <Panel title="Selected color" className="w-96" bodyClass="flex">
              <div className="w-[213px]">
                <p className="mt-0.5 ml-2.5 h-[15px] w-[111px] bg-[#f0f0f0] pl-px">RGB Levels</p>
                <LevelBars />
                <div className="mt-3.5 ml-[9px] flex h-[74px] w-48 bg-[#f0f0f0] font-['Liberation_Sans',Arial,sans-serif] text-[13px] font-bold">
                  <span className="w-1/2 text-center">Measure</span>
                  <span className="w-1/2 text-center">Reference</span>
                </div>
                <p className="mt-[15px] ml-2.5 h-[15px] w-[43px] bg-[#f0f0f0] pl-px">Target</p>
                <Target />
              </div>
              <div>
                <p className="mt-px ml-2.5 h-3.5 w-32 bg-[#f0f0f0] text-center leading-3.5">Current Measure</p>
                <div className="mt-[9px] flex w-[153px] border-2 border-t-[#696969] border-r-white border-b-white border-l-[#696969] bg-[#f0f0f0]">
                  <div className="w-[133px] bg-[#a0a0a0] pb-[22px]">
                    <FieldTable />
                  </div>
                  <div className="flex flex-1 flex-col items-center justify-between pt-1 pb-1">
                    <Chevron d={UP} dim />
                    <Chevron d={DOWN} dim />
                  </div>
                </div>
              </div>
            </Panel>

            <Panel title="Information" className="min-w-0 flex-1" bodyClass="pb-[5px] pl-[5px]">
              <Dropdown
                label="Information shown"
                options={['RGB - Gamma', 'RGB', 'Gamma']}
                className="mt-[3px] -ml-px w-[302px]"
                selectClass="h-[22px] bg-[#0078d7] pl-0.5 text-white"
              />
              <div className="mt-[7px] -mr-px flex">
                <BalanceChart />
                <GammaChart />
              </div>
            </Panel>
          </div>
        </main>

        <div className="mr-0.5 flex w-[17px] flex-col items-center bg-[#f0f0f0] pt-1 pb-1">
          <Chevron d={UP} />
          <span className="mt-1 mb-[31px] w-full flex-1 bg-[#cdcdcd]" />
          <Chevron d={DOWN} />
        </div>
      </div>

      <div className="flex h-5 items-center border-t border-b-2 border-[#f8f8f8] bg-[#f0f0f0] pr-[22px] pl-[5px]">
        <Chevron d={LEFT} />
        <span className="mr-[43px] ml-1 h-4 flex-1 bg-[#cdcdcd]" />
        <Chevron d={RIGHT} />
      </div>

      <div className="flex h-[19px] items-center border-t border-black bg-[#f0f0f0] font-['Liberation_Sans',Arial,sans-serif] text-[10px]">
        {[
          ['Close', 'M1 1l7 7M8 1l-7 7', 'none'],
          ['Previous', 'M6 0v9L2 4.5z', '#000'],
          ['Next', 'M3 0v9l4-4.5z', '#000'],
        ].map(([label, d, fill]) => (
          <button
            key={label}
            type="button"
            aria-label={label}
            className={`flex h-[17px] w-[17px] items-center justify-center outline-1 outline-black ${raised}`}
          >
            <svg viewBox="0 0 9 9" className="size-2" aria-hidden="true">
              <path d={d} fill={fill} stroke="#000" strokeWidth={fill === 'none' ? 2 : 0} />
            </svg>
          </button>
        ))}
        <div className="ml-[11px] flex">
          <Tab label="Measures" width="w-[75px]" active />
          <Tab label="Luminance" width="w-[73px]" />
          <Tab label="Gamma" width="w-[60px]" />
          <Tab label="RGB Levels" width="w-[86px]" />
        </div>
        <svg viewBox="0 0 14 14" className="mr-20 ml-auto size-3.5" aria-hidden="true">
          <path d="M0 0h14v10l-3 4-2-2-4 2-1-3-4-2z" fill="#808000" stroke="#000" />
          <rect x="2" y="2" width="8" height="6" fill="#fff" />
          <rect x="5" y="3" width="4" height="4" fill="#f00" />
          <path d="M8 9h5v2l-2 3-3-3z" fill="#ff0" />
        </svg>
        <div className="pr-1.5">
          <Check label="Reference" text="text-[11px]" />
        </div>
      </div>

      <footer className="flex h-[19px] items-stretch border-b-2 border-[#2b2f36] bg-linear-to-r from-[#e4ecf7] to-[#eef3fb] pl-0.5 font-['Open_Sans',sans-serif] text-[11px] leading-[19px]">
        <span className="flex-1">Ready</span>
        <span className="mr-[3px] w-[74px] border-t border-l border-[#9db2d0]" />
        <span className="mr-[3px] w-7 border-t border-l border-[#9db2d0]" />
        <span className="mr-[3px] w-[33px] border-t border-l border-[#9db2d0] pl-0.5">NUM</span>
        <span className="w-[33px] border-t border-l border-[#9db2d0]" />
      </footer>
    </div>
  );
}
